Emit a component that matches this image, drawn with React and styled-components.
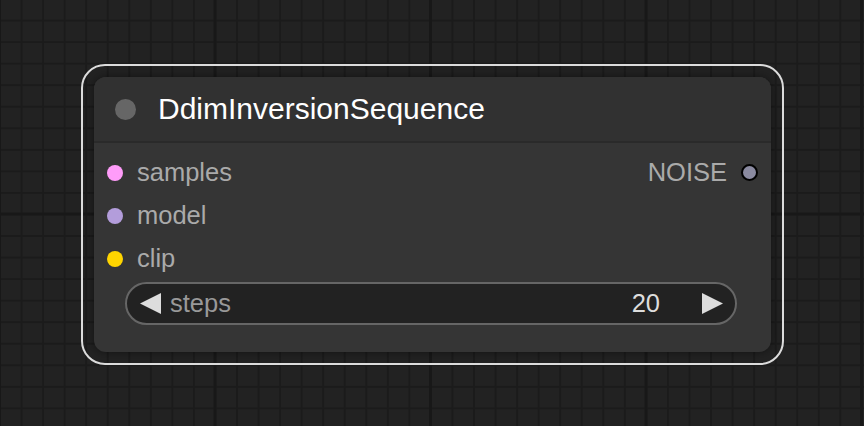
import React from "react";
import styled, { createGlobalStyle } from "styled-components";

const GlobalStyle = createGlobalStyle`
  html, body {
    margin: 0;
    padding: 0;
    background: #222;
  }
  body {
    font-family: "Liberation Sans", Arial, sans-serif;
  }
`;

// graph canvas with minor + major grid lines
const Canvas = styled.div`
  position: relative;
  width: 864px;
  height: 426px;
  overflow: hidden;
  background-color: #222;
  background-image:
    linear-gradient(to right, #181818 3px, transparent 3px),
    linear-gradient(to bottom, #181818 3px, transparent 3px),
    linear-gradient(to right, #1b1b1b 2px, transparent 2px),
    linear-gradient(to bottom, #1b1b1b 2px, transparent 2px);
  background-size: 215.5px 215.5px, 215.5px 215.5px, 21.55px 21.55px, 21.55px 21.55px;
  background-position: -2px -3px, -2px -3px, -1px -2px, -1px -2px;
`;

const Node = styled.div`
  position: absolute;
  left: ${(p) => p.x}px;
  top: ${(p) => p.y}px;
  width: 677px;
  height: 275px;
  display: flex;
  flex-direction: column;
  background: #353535;
  border-radius: 12px;
  box-shadow: 0 0 10px rgba(0, 0, 0, 0.45);

  &::before {
    content: "";
    position: absolute;
    inset: -13px;
    border: 2px solid #dcdcdc;
    border-radius: 24px;
    pointer-events: none;
  }
`;

const Title = styled.div`
  display: flex;
  align-items: center;
  height: 64px;
  padding-left: 21px;
  gap: 22px;
  background: #313131;
  border-radius: 12px 12px 0 0;
  border-bottom: 2px solid #2a2a2a;
  color: #fff;
  font-size: 30px;
`;

const TitleDot = styled.span`
  width: 21px;
  height: 21px;
  border-radius: 50%;
  background: #666;
`;

const Body = styled.div`
  display: flex;
  flex-direction: column;
  padding: 8px 13px 0 13px;
`;

const Row = styled.div`
  display: flex;
  align-items: center;
  justify-content: space-between;
  height: 43px;
`;

const Slot = styled.div`
  display: flex;
  align-items: center;
  gap: 14px;
  color: #aaa;
  font-size: 25.5px;
`;

const Dot = styled.span`
  width: ${(p) => (p.ring ? 17 : 16)}px;
  height: ${(p) => (p.ring ? 17 : 16)}px;
  border-radius: 50%;
  background: ${(p) => p.color};
  box-sizing: border-box;
  border: ${(p) => (p.ring ? "2px solid #000" : "none")};
`;

const Widget = styled.div`
  display: flex;
  align-items: center;
  height: 43px;
  margin: 2px 34px 0 31px;
  padding: 0 12px 0 13px;
  box-sizing: border-box;
  border: 2px solid #666;
  border-radius: 22px;
  background: #222;
  font-size: 25.5px;
`;

const Arrow = styled.svg`
  width: 21px;
  height: 21px;
  flex: none;
`;

const WidgetLabel = styled.span`
  color: #999;
  margin-left: 9px;
  flex: 1;
`;

const WidgetValue = styled.span`
  color: #ddd;
  margin-right: 42px;
`;

const inputs = [
  { name: "samples", color: "#ff9cf9" },
  { name: "model", color: "#b39ddb" },
  { name: "clip", color: "#ffd500" },
];

export default function App() {
  return (
    <>
      <GlobalStyle />
      <Canvas>
        <Node x={94} y={77}>
          <Title>
            <TitleDot />
            DdimInversionSequence
          </Title>
          <Body>
            {inputs.map((inp, i) => (
              <Row key={inp.name}>
                <Slot>
                  <Dot color={inp.color} />
                  {inp.name}
                </Slot>
                {i === 0 && (
                  <Slot>
                    NOISE
                    <Dot color="#8a8aa0" ring />
                  </Slot>
                )}
              </Row>
            ))}
          </Body>
          <Widget>
            <Arrow viewBox="0 0 21 21">
              <polygon points="21,0 21,21 0,10.5" fill="#ddd" />
            </Arrow>
            <WidgetLabel>steps</WidgetLabel>
            <WidgetValue>20</WidgetValue>
            <Arrow viewBox="0 0 21 21">
              <polygon points="0,0 0,21 21,10.5" fill="#ddd" />
            </Arrow>
          </Widget>
        </Node>
      </Canvas>
    </>
  );
}
